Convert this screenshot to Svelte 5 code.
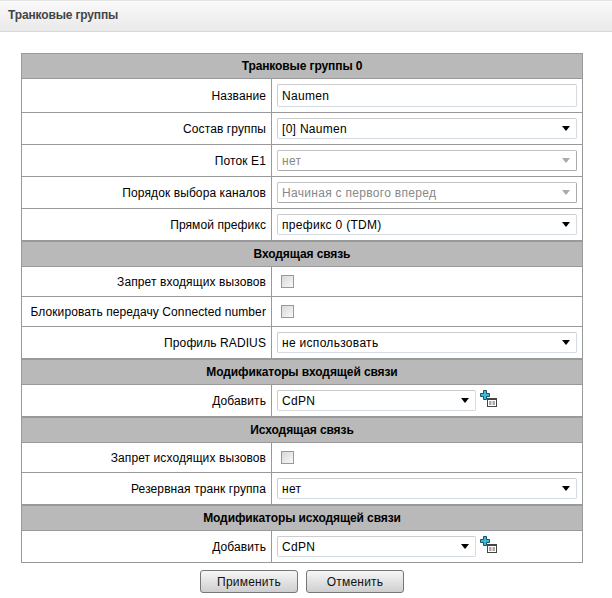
<script>
    const rows = [
        { type: "head", label: "Транковые группы 0", first: true },
        { type: "text", label: "Название", value: "Naumen", first: true },
        { type: "select", label: "Состав группы", value: "[0] Naumen" },
        { type: "select", label: "Поток E1", value: "нет", disabled: true },
        { type: "select", label: "Порядок выбора каналов", value: "Начиная с первого вперед", disabled: true },
        { type: "select", label: "Прямой префикс", value: "префикс 0 (TDM)" },
        { type: "head", label: "Входящая связь" },
        { type: "check", label: "Запрет входящих вызовов" },
        { type: "check", label: "Блокировать передачу Connected number" },
        { type: "select", label: "Профиль RADIUS", value: "не использовать" },
        { type: "head", label: "Модификаторы входящей связи" },
        { type: "add", label: "Добавить", value: "CdPN" },
        { type: "head", label: "Исходящая связь" },
        { type: "check", label: "Запрет исходящих вызовов" },
        { type: "select", label: "Резервная транк группа", value: "нет" },
        { type: "head", label: "Модификаторы исходящей связи" },
        { type: "add", label: "Добавить", value: "CdPN" }
    ];
</script>

<div class="page">
    <div class="title">Транковые группы</div>
    <div class="content">
        <table>
            <colgroup>
                <col class="label-col" />
                <col />
            </colgroup>
            <tbody>
                {#each rows as row}
                    {#if row.type === "head"}
                        <tr class="head" class:first={row.first}><th colspan="2">{row.label}</th></tr>
                    {:else}
                        <tr class:first={row.first} class:check-row={row.type === "check"}>
                            <td class="label">{row.label}</td>
                            <td class="field">
                                {#if row.type === "text"}
                                    <div class="control input"><span>{row.value}</span></div>
                                {:else if row.type === "check"}
                                    <div class="checkbox"></div>
                                {:else if row.type === "add"}
                                    <div class="add">
                                        <div class="control short">
                                            <span>{row.value}</span>
                                            <i class="arrow"></i>
                                        </div>
                                        <svg class="add-icon" width="17" height="17" viewBox="0 0 17 17">
                                            <path d="M3.5 .5h3v3h3v3h-3v3h-3v-3h-3v-3h3z" fill="#35bbdd" stroke="#24505e" />
                                            <rect x="7.5" y="8.5" width="9" height="8" fill="#fff" stroke="#444" />
                                            <path d="M7.5 9.5h9" stroke="#444" />
                                            <path d="M9 12h2.5M12.5 12h2.5M9 14h2.5M12.5 14h2.5" stroke="#555" />
                                        </svg>
                                    </div>
                                {:else}
                                    <div class="control" class:disabled={row.disabled}>
                                        <span>{row.value}</span>
                                        <i class="arrow"></i>
                                    </div>
                                {/if}
                            </td>
                        </tr>
                    {/if}
                {/each}
            </tbody>
        </table>
        <div class="buttons">
            <button>Применить</button>
            <button>Отменить</button>
        </div>
    </div>
</div>

<style>
    :global(body) {
        margin: 0;
        background: #fff;
    }

    .page {
        width: 612px;
        height: 598px;
        overflow: hidden;
        font-family: "Liberation Sans", Arial, sans-serif;
        font-size: 12px;
        color: #000;
    }

    .title {
        box-sizing: border-box;
        height: 32px;
        padding: 0 8px;
        line-height: 29px;
        font-weight: bold;
        letter-spacing: -0.15px;
        color: #444;
        background: linear-gradient(#fafafa, #e9e9e9);
        border-top: 1px solid #e4e4e4;
        border-bottom: 1px solid #d8d8d8;
    }

    .content {
        width: 562px;
        margin: 21px 0 0 21px;
    }

    table {
        width: 100%;
        border-collapse: collapse;
        table-layout: fixed;
        border: 1px solid #999;
    }

    .label-col {
        width: 250px;
    }

    th,
    td {
        border: 1px solid #999;
        padding: 0;
    }

    .head th {
        height: 25px;
        background: #b9b9b9;
        box-shadow: inset 0 1px 0 #999;
        font-size: 12px;
        letter-spacing: -0.1px;
        color: #000;
    }

    .head.first th {
        height: 24px;
        box-shadow: none;
    }

    tr .field {
        height: 31px;
    }

    tr.first .field {
        height: 33px;
    }

    tr.check-row .field {
        height: 29px;
    }

    .label {
        text-align: right;
        padding-right: 5px;
        padding-top: 1px;
        letter-spacing: 0.1px;
    }

    .field {
        padding-left: 5px;
        padding-right: 5px;
    }

    .control {
        box-sizing: border-box;
        height: 21px;
        padding: 0 5px 0 4px;
        display: flex;
        align-items: center;
        justify-content: space-between;
        border: 1px solid #d4dbe2;
        border-top-color: #ccc;
        border-left-color: #ccc;
        border-radius: 2px;
        background: #fff;
        font-size: 12px;
        letter-spacing: 0.3px;
    }

    .control span {
        padding-top: 1px;
    }

    .control.input {
        height: 23px;
    }

    .control.disabled {
        color: #888;
        border-color: #c4c4c4;
        border-bottom-color: #aaa;
        border-right-color: #aaa;
    }

    .arrow {
        width: 0;
        height: 0;
        margin-right: 1px;
        border-left: 4.5px solid transparent;
        border-right: 4.5px solid transparent;
        border-top: 5px solid #000;
    }

    .disabled .arrow {
        border-top-color: #aaa;
    }

    .checkbox {
        box-sizing: border-box;
        width: 13px;
        height: 13px;
        margin-left: 4px;
        border: 1px solid #999;
        background: linear-gradient(135deg, #d6d8dc, #f8f8f8);
    }

    .add {
        display: flex;
        align-items: flex-start;
        gap: 4px;
    }

    .short {
        width: 199px;
    }

    .add-icon {
        flex: none;
    }

    .buttons {
        display: flex;
        justify-content: center;
        gap: 8px;
        margin-top: 7px;
    }

    button {
        width: 98px;
        height: 23px;
        padding: 0;
        border: 1px solid #777;
        border-radius: 3px;
        background: linear-gradient(#f6f6f6, #cfcfcf);
        font-family: inherit;
        font-size: 12px;
        letter-spacing: 0.2px;
        color: #111;
    }
</style>
